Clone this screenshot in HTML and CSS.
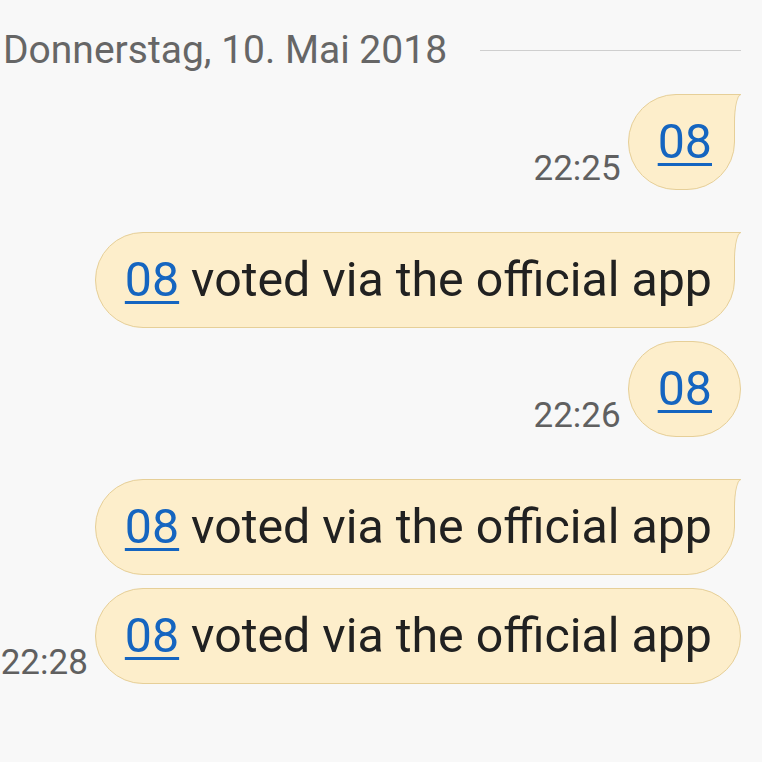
FILE: index.html
```html
<!DOCTYPE html>
<html>
<head>
<meta charset="utf-8">
<link rel="stylesheet" href="styles.css">
</head>
<body>
<div class="chat">
  <div class="date-row">
    <span class="date">Donnerstag, 10. Mai 2018</span>
    <span class="rule"></span>
  </div>

  <div class="msg first">
    <span class="time">22:25</span>
    <div class="bubble tail"><a class="link">08</a></div>
  </div>

  <div class="msg group">
    <div class="bubble tail"><a class="link">08</a> voted via the official app</div>
  </div>

  <div class="msg cont">
    <span class="time">22:26</span>
    <div class="bubble"><a class="link">08</a></div>
  </div>

  <div class="msg group">
    <div class="bubble tail"><a class="link">08</a> voted via the official app</div>
  </div>

  <div class="msg cont">
    <span class="time">22:28</span>
    <div class="bubble"><a class="link">08</a> voted via the official app</div>
  </div>
</div>
</body>
</html>
```

FILE: styles.css
```css
html, body {
  margin: 0;
  padding: 0;
  background: #f8f8f8;
}
body {
  width: 762px;
  height: 762px;
  overflow: hidden;
  font-family: Roboto, "Noto Sans", sans-serif;
}
.chat {
  padding: 20px 21px 0 3px;
}
.date-row {
  display: flex;
  align-items: center;
  gap: 33px;
  height: 58px;
}
.date {
  font-size: 39px;
  color: #666666;
  white-space: nowrap;
  margin-top: 2px;
}
.rule {
  flex: 1;
  height: 1px;
  background: #cfcfcf;
  margin-top: 2px;
}
.msg {
  display: flex;
  justify-content: flex-end;
  align-items: flex-end;
  gap: 7px;
}
.msg.first { margin-top: 16px; }
.msg.group { margin-top: 42px; }
.msg.cont { margin-top: 13px; }
.time {
  font-size: 35px;
  color: #606060;
  line-height: 1;
  padding-bottom: 4px;
}
.bubble {
  position: relative;
  font-size: 48.3px;
  line-height: 56px;
  color: #212121;
  background: #fdeecb;
  border: 1px solid #e6cf98;
  border-radius: 48px;
  padding: 19px 28px 19px 29px;
  white-space: nowrap;
}
.bubble.tail {
  border-top-right-radius: 0;
  padding-right: 22px;
  margin-right: 6px;
}
.bubble.tail::before {
  content: "";
  position: absolute;
  top: -1px;
  right: -7px;
  width: 7px;
  height: 26px;
  background: #fdeecb;
  border-top: 1px solid #e6cf98;
}
.bubble.tail::after {
  content: "";
  position: absolute;
  top: -1px;
  right: -7px;
  width: 6px;
  height: 27px;
  background: #f8f8f8;
  border-top: 1px solid #e6cf98;
  border-left: 1px solid #e6cf98;
  border-top-left-radius: 100%;
}
.link {
  color: #1565c0;
  text-decoration: underline;
  text-underline-offset: 5px;
  text-decoration-thickness: 3px;
}
```
